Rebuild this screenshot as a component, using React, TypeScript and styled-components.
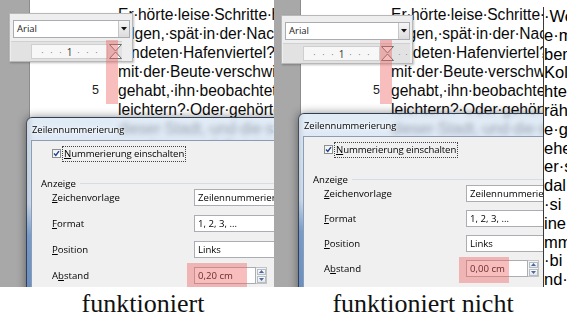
import React from "react";
import styled, { createGlobalStyle } from "styled-components";

const GlobalStyle = createGlobalStyle`
  html, body { margin: 0; padding: 0; background: #fff; }
  #root { width: 567px; height: 320px; }
`;

const Root = styled.div`
  width: 567px;
  height: 320px;
  display: flex;
  flex-direction: column;
  background: #fff;
  overflow: hidden;
`;

const Shots = styled.div`
  display: grid;
  grid-template-columns: 274px 293px;
  height: 287px;
`;

const Shot = styled.div`
  position: relative;
  height: 287px;
  background: #a8a8a8;
  overflow: hidden;
`;

/* ---------- document page ---------- */

const Page = styled.div<{ $left: number }>`
  margin-left: ${(p) => p.$left}px;
  height: 100%;
  box-sizing: border-box;
  padding-top: 5px;
  background: #fff;
  border-left: 1px solid #8c8c8c;
  font-family: "Liberation Sans", Arial, sans-serif;
  font-size: 15.6px;
  line-height: 19px;
  color: #0a0a0a;
`;

const Line = styled.div<{ $indent: number }>`
  display: grid;
  grid-template-columns: ${(p) => p.$indent}px max-content;
  white-space: nowrap;
`;

const LineNo = styled.span<{ $gap: number }>`
  text-align: right;
  padding-right: ${(p) => p.$gap}px;
  font-size: 12.5px;
  color: #222;
`;

const Sp = styled.span`
  display: inline-flex;
  justify-content: center;
  width: 0.278em;
`;

const Words = ({ text }: { text: string }) => (
  <span>
    {text.split(" ").map((w, i) => (
      <React.Fragment key={i}>
        {i > 0 && <Sp>·</Sp>}
        {w}
      </React.Fragment>
    ))}
  </span>
);

const docLines = [
  "Er hörte leise Schritte hinter sich. Das",
  "folgen, spät in der Nacht und dazu",
  " undeten Hafenviertel? Gerade jetzt",
  "mit der Beute verschwinden wollte!",
  "gehabt, ihn beobachtet und abgewartet,",
  "leichtern? Oder gehörten die Schritte",
  "dieser Stadt, und die stählerne Acht",
  "zuschnappen? Er hörte leise Schritte",
  "hinter sich. Das bedeutete nichts",
  "Gutes. Wer würde ihm folgen, spät in",
  "der Nacht und dazu in dieser engen",
  "Gasse mitten im übel beleumundeten",
  "Hafenviertel? Gerade jetzt, wo er das",
  "Ding seines Lebens gedreht hatte",
  "und mit der Beute verschwinden wollte!",
];

/* ---------- floating toolbar ---------- */

const Toolbar = styled.div<{ $x: number; $y: number; $w: number }>`
  position: absolute;
  left: ${(p) => p.$x}px;
  top: ${(p) => p.$y}px;
  width: ${(p) => p.$w}px;
  box-sizing: border-box;
  padding: 6px 2px 0 3px;
  display: flex;
  flex-direction: column;
  gap: 3px;
  background: #eeeeee;
  border: 1px solid #b8b8b8;
  box-shadow: 1px 1px 2px rgba(0, 0, 0, 0.25);
  z-index: 2;
`;

const Combo = styled.div`
  height: 18px;
  box-sizing: border-box;
  display: flex;
  background: #fff;
  border: 1px solid #a9adb3;
  font-family: "Open Sans", "Noto Sans", sans-serif;
  font-size: 9.5px;
  line-height: 16px;
  color: #222;
`;

const ComboText = styled.span`
  flex: 1;
  padding-left: 3px;
`;

const DropButton = styled.span`
  width: 10px;
  display: flex;
  align-items: center;
  justify-content: center;
  border-left: 1px solid #c6c6c6;
  background: linear-gradient(#f6f6f6, #dcdcdc);
`;

const RulerRow = styled.div<{ $cut: number }>`
  height: 19px;
  margin: 0 ${(p) => p.$cut}px 0 -2px;
  display: flex;
  align-items: center;
  background: #e2e2e2;
  border-top: 1px solid #d0d0d0;
  overflow: hidden;
  svg {
    flex-shrink: 0;
  }
`;

const Scale = styled.div`
  flex-shrink: 0;
  margin-left: 20px;
  width: 77px;
  height: 15px;
  box-sizing: border-box;
  padding-left: 6px;
  display: grid;
  grid-template-columns: repeat(7, 9px);
  align-items: center;
  background: #f7f7f7;
  border: 1px solid #cfcfcf;
  font-family: "Open Sans", "Noto Sans", sans-serif;
  font-size: 10px;
  color: #333;
`;

const Tick = styled.span<{ $num?: boolean }>`
  text-align: center;
  font-size: ${(p) => (p.$num ? 10 : 9)}px;
  color: ${(p) => (p.$num ? "#333" : "#777")};
`;

const TrailDots = styled.span`
  padding-left: 3px;
  letter-spacing: 4px;
  font-size: 9px;
  color: #777;
  white-space: nowrap;
`;

const Hourglass = () => (
  <svg width="15" height="17" viewBox="0 0 15 17">
    <path d="M1.5 1.5H13.5L7.5 8Z" fill="#fbfbfb" stroke="#707070" strokeWidth="1" />
    <path d="M7.5 9L13.5 15.5H1.5Z" fill="#fbfbfb" stroke="#707070" strokeWidth="1" />
  </svg>
);

const DownArrow = () => (
  <svg width="6" height="4" viewBox="0 0 6 4">
    <path d="M0 0H6L3 3.5Z" fill="#111" />
  </svg>
);

/* ---------- annotation marks ---------- */

const Mark = styled.div<{ $x: number; $y: number; $w: number; $h: number }>`
  position: absolute;
  left: ${(p) => p.$x}px;
  top: ${(p) => p.$y}px;
  width: ${(p) => p.$w}px;
  height: ${(p) => p.$h}px;
  background: rgba(238, 100, 100, 0.42);
  z-index: 5;
  pointer-events: none;
`;

/* ---------- dialog ---------- */

const Dialog = styled.div<{ $x: number; $y: number }>`
  position: absolute;
  left: ${(p) => p.$x}px;
  top: ${(p) => p.$y}px;
  width: 262px;
  height: 190px;
  padding: 0 4px;
  display: flex;
  flex-direction: column;
  border: 1px solid rgba(35, 45, 60, 0.8);
  border-radius: 6px 6px 0 0;
  background: linear-gradient(
    to bottom,
    rgba(214, 228, 243, 0.72) 0%,
    rgba(196, 214, 236, 0.72) 45%,
    rgba(112, 150, 198, 0.92) 62%,
    rgba(96, 134, 186, 0.95) 100%
  );
  backdrop-filter: blur(2.5px);
  box-shadow: 0 0 10px rgba(0, 0, 0, 0.45);
  font-family: "Open Sans", "Noto Sans", sans-serif;
  color: #000;
  z-index: 3;
`;

const TitleBar = styled.div`
  height: 22px;
  padding-left: 1px;
  display: flex;
  align-items: center;
  font-size: 9.4px;
  text-shadow: 0 0 5px rgba(255, 255, 255, 0.95), 0 0 2px rgba(255, 255, 255, 0.9);
`;

const Content = styled.div`
  flex: 1;
  padding-top: 4px;
  background: #f0f0f0;
  border: 1px solid #8a9db5;
  font-size: 9.6px;
`;

const CheckRow = styled.div`
  height: 17px;
  padding-left: 20px;
  display: flex;
  align-items: center;
`;

const CheckBox = styled.span`
  width: 9px;
  height: 9px;
  box-sizing: border-box;
  display: flex;
  align-items: center;
  justify-content: center;
  border: 1px solid #8e8f8f;
  background: linear-gradient(135deg, #f0f0f0, #fff);
`;

const CheckLabel = styled.span`
  margin-left: 1px;
  padding: 0 1px;
  line-height: 14px;
  letter-spacing: -0.1px;
  border: 1px dotted #444;
`;

const GroupHead = styled.div`
  height: 12px;
  margin-top: 15px;
  padding-left: 9px;
  display: flex;
  align-items: center;
  gap: 4px;
  &::after {
    content: "";
    flex: 1;
    margin-right: 8px;
    border-top: 1px solid #d5dde6;
  }
`;

const FieldRow = styled.div<{ $h: number }>`
  height: ${(p) => p.$h}px;
  padding-left: 20px;
  display: grid;
  grid-template-columns: 142px 1fr;
  align-items: start;
`;

const RowLabel = styled.span`
  line-height: 17px;
`;

const Field = styled.div`
  height: 17px;
  margin-right: 8px;
  box-sizing: border-box;
  padding-left: 3px;
  background: #fff;
  border: 1px solid #abadb3;
  line-height: 15px;
  white-space: nowrap;
  overflow: hidden;
`;

const SpinWrap = styled.div`
  position: relative;
  display: flex;
`;

const SpinValue = styled(Field)`
  width: 62px;
  margin-right: 0;
`;

const SpinButtons = styled.div`
  width: 11px;
  height: 17px;
  box-sizing: border-box;
  display: flex;
  flex-direction: column;
  border: 1px solid #c2c2c2;
  border-left: none;
  background: #f4f4f4;
`;

const SpinHalf = styled.span<{ $down?: boolean }>`
  flex: 1;
  display: flex;
  align-items: center;
  justify-content: center;
  border: 1px solid #b6bcc6;
  margin: 0.5px;
  background: linear-gradient(#fbfbfb, #e4e7ec);
  svg {
    transform: ${(p) => (p.$down ? "none" : "rotate(180deg)")};
  }
`;

const HighLight = styled.div<{ $w: number; $h: number; $t: number }>`
  position: absolute;
  left: -7px;
  top: ${(p) => p.$t}px;
  width: ${(p) => p.$w}px;
  height: ${(p) => p.$h}px;
  background: rgba(238, 100, 100, 0.42);
  pointer-events: none;
`;

const SpinArrow = () => (
  <svg width="5" height="3" viewBox="0 0 5 3">
    <path d="M0 0H5L2.5 3Z" fill="#4a6a9a" />
  </svg>
);

const Check = () => (
  <svg width="7" height="7" viewBox="0 0 7 7">
    <path d="M1 3.6L2.8 5.4L6 1.2" fill="none" stroke="#1c3f94" strokeWidth="1.4" />
  </svg>
);

type DialogProps = {
  x: number;
  y: number;
  rowH: number;
  value: string;
  hw: number;
  hh: number;
  ht: number;
};

const LineNumberDialog = ({ x, y, rowH, value, hw, hh, ht }: DialogProps) => (
  <Dialog $x={x} $y={y}>
    <TitleBar>Zeilennummerierung</TitleBar>
    <Content>
      <CheckRow>
        <CheckBox>
          <Check />
        </CheckBox>
        <CheckLabel>
          <u>N</u>ummerierung einschalten
        </CheckLabel>
      </CheckRow>
      <GroupHead>Anzeige</GroupHead>
      <FieldRow $h={rowH}>
        <RowLabel>
          <u>Z</u>eichenvorlage
        </RowLabel>
        <Field>Zeilennummerierung</Field>
      </FieldRow>
      <FieldRow $h={rowH}>
        <RowLabel>
          <u>F</u>ormat
        </RowLabel>
        <Field>1, 2, 3, ...</Field>
      </FieldRow>
      <FieldRow $h={rowH}>
        <RowLabel>
          <u>P</u>osition
        </RowLabel>
        <Field>Links</Field>
      </FieldRow>
      <FieldRow $h={rowH}>
        <RowLabel>
          A<u>b</u>stand
        </RowLabel>
        <SpinWrap>
          <SpinValue>{value}</SpinValue>
          <SpinButtons>
            <SpinHalf>
              <SpinArrow />
            </SpinHalf>
            <SpinHalf $down>
              <SpinArrow />
            </SpinHalf>
          </SpinButtons>
          <HighLight $w={hw} $h={hh} $t={ht} />
        </SpinWrap>
      </FieldRow>
    </Content>
  </Dialog>
);

/* ---------- second window on the right ---------- */

const SideWindow = styled.div`
  position: absolute;
  top: 7px;
  right: 0;
  bottom: 0;
  width: 23px;
  background: #fff;
  border-left: 1.5px solid #3a3a3a;
  font-family: "Liberation Sans", Arial, sans-serif;
  font-size: 16.5px;
  line-height: 18.8px;
  color: #000;
  white-space: nowrap;
  overflow: hidden;
  z-index: 4;
`;

const sideLines = ["·We", "e·m", "bem", "Kol", "hte", "räh", "e·g", "ehe", "er·s", "dal", "·si", "ine", "mme", "·bi", "nd·"];

/* ---------- captions ---------- */

const Captions = styled.div`
  display: grid;
  grid-template-columns: 274px 293px;
  height: 33px;
  font-family: "Liberation Serif", "Times New Roman", serif;
  font-size: 26px;
  line-height: 33px;
  color: #111;
`;

const Caption = styled.div<{ $shift: number }>`
  text-align: center;
  padding-left: ${(p) => p.$shift}px;
`;

type ShotProps = {
  pageLeft: number;
  indent: number;
  numGap: number;
  tb: { x: number; y: number; w: number; cut: number };
  dlg: DialogProps;
  children?: React.ReactNode;
};

const Screenshot = ({ pageLeft, indent, numGap, tb, dlg, children }: ShotProps) => (
  <Shot>
    <Page $left={pageLeft}>
      {docLines.map((l, i) => (
        <Line key={i} $indent={indent}>
          <LineNo $gap={numGap}>{i === 4 ? "5" : ""}</LineNo>
          <Words text={l} />
        </Line>
      ))}
    </Page>
    <Toolbar $x={tb.x} $y={tb.y} $w={tb.w}>
      <Combo>
        <ComboText>Arial</ComboText>
        <DropButton>
          <DownArrow />
        </DropButton>
      </Combo>
      <RulerRow $cut={tb.cut}>
        <Scale>
          <Tick>·</Tick>
          <Tick>·</Tick>
          <Tick>·</Tick>
          <Tick $num>1</Tick>
          <Tick>·</Tick>
          <Tick>·</Tick>
          <Tick>·</Tick>
        </Scale>
        <Hourglass />
        <TrailDots>··</TrailDots>
      </RulerRow>
    </Toolbar>
    <Mark $x={106} $y={40} $w={12} $h={64} />
    <LineNumberDialog {...dlg} />
    {children}
  </Shot>
);

export default function App() {
  return (
    <Root>
      <GlobalStyle />
      <Shots>
        <Screenshot
          pageLeft={29}
          indent={88}
          numGap={19}
          tb={{ x: 9, y: 13, w: 124, cut: 8 }}
          dlg={{ x: 26, y: 117, rowH: 26, value: "0,20 cm", hw: 60, hh: 28, ht: -4 }}
        />
        <Screenshot
          pageLeft={26}
          indent={90}
          numGap={11}
          tb={{ x: 7, y: 15, w: 132, cut: 0 }}
          dlg={{ x: 24, y: 113, rowH: 25, value: "0,00 cm", hw: 50, hh: 26, ht: -3 }}
        >
          <SideWindow>
            {sideLines.map((s) => (
              <div key={s}>{s}</div>
            ))}
          </SideWindow>
        </Screenshot>
      </Shots>
      <Captions>
        <Caption $shift={12}>funktioniert</Caption>
        <Caption $shift={5}>funktioniert nicht</Caption>
      </Captions>
    </Root>
  );
}
